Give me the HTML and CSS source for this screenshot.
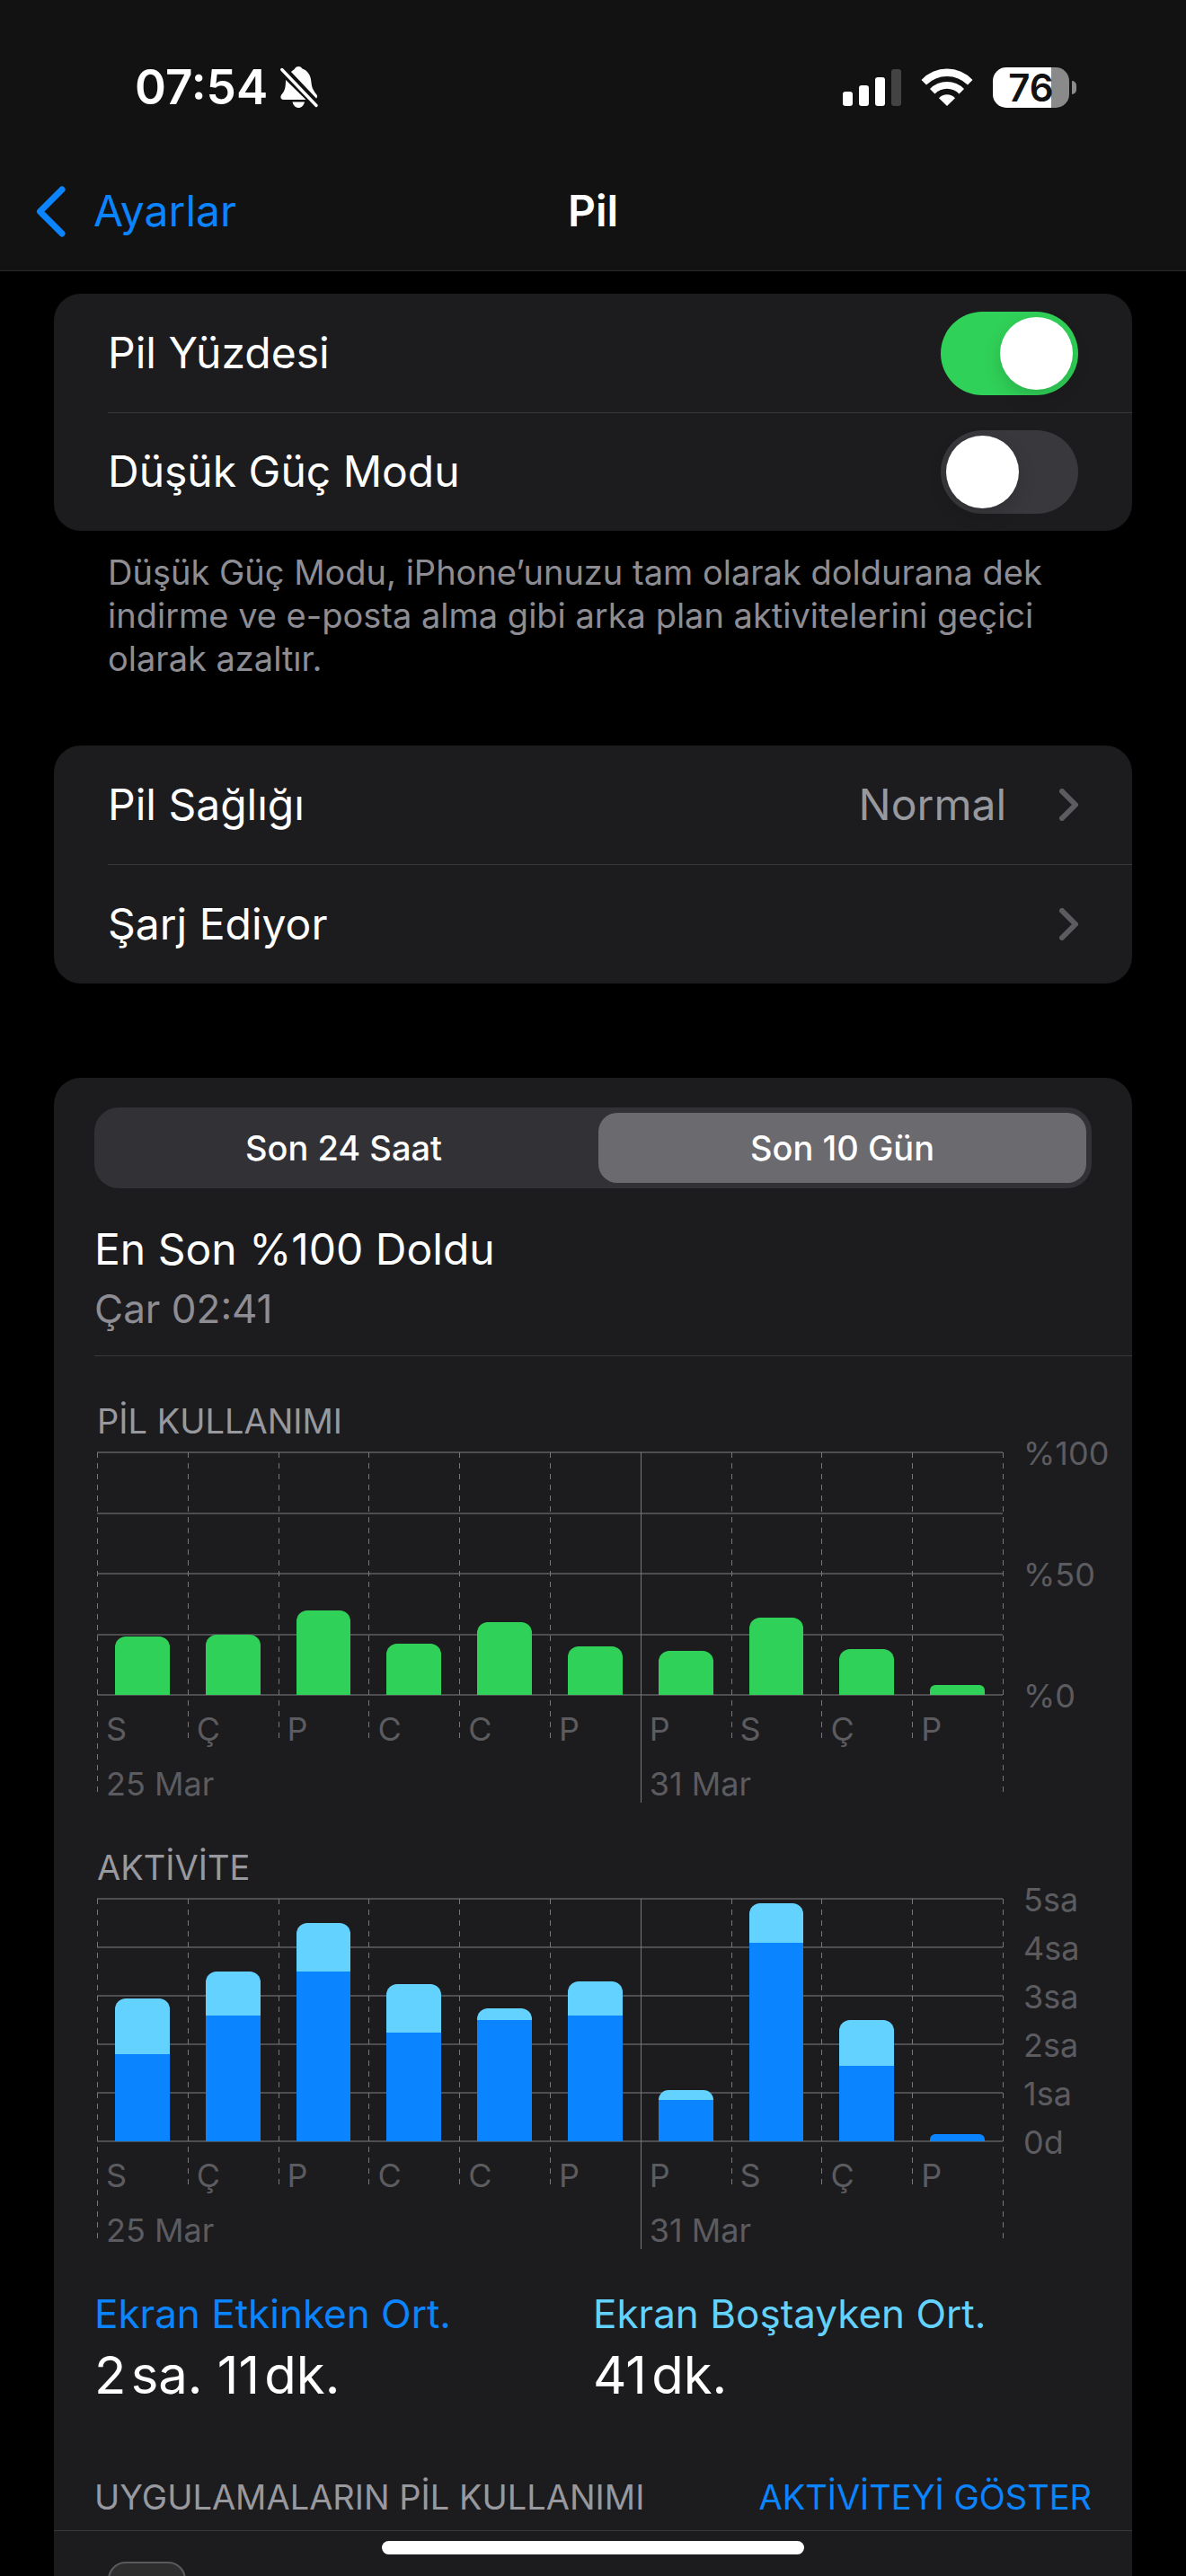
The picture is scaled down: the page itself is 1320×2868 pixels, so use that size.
FILE: index.html
```html
<!DOCTYPE html>
<html lang="tr">
<head>
  <meta charset="UTF-8">
  <meta name="viewport" content="width=device-width, initial-scale=1.0">
  <title>Pil</title>
  <link rel="stylesheet" href="styles.css">
</head>
<body>
  <header>
    <div class="status">
      <div class="status-left">
        <span class="time">07:54</span>
        <svg class="bell" width="42" height="46" viewBox="0 0 42 46" fill="#fff">
          <path d="M12 6 C14 4 15 4 16 2.500 C18 -0.800 22.500 -0.800 24.500 2.500 C31 5 34 10 34.500 18 C35 25 38 28 40.500 31.500 C41.500 33 41.200 34.500 40 35.500 Z"/>
          <path d="M6 15 L28.500 37 H3.500 C0.500 37 -0.500 34 1.200 31.500 C4 28 6 26 6 15 Z"/>
          <path d="M13.500 39.500 H27 C26 43.500 23.500 46 20.300 46 C17 46 14.500 43.500 13.500 39.500 Z"/>
          <path d="M1.800 3.500 L40 43.500" stroke="#fff" stroke-width="3.400" stroke-linecap="round"/>
        </svg>
      </div>
      <div class="status-right">
        <svg class="signal" width="65" height="42" viewBox="0 0 65 42" fill="#fff">
          <rect x="0" y="26" width="11" height="16" rx="3"/>
          <rect x="18" y="19" width="11" height="23" rx="3"/>
          <rect x="36" y="10" width="11" height="32" rx="3"/>
          <rect x="54" y="1" width="11" height="41" rx="3" fill="#434343"/>
        </svg>
        <svg class="wifi" width="58" height="42" viewBox="0 0 58 42" fill="#fff">
          <path d="M0.500 13 A39 39 0 0 1 57.500 13 L52 18.500 A32.600 32.600 0 0 0 6 18.500 Z"/>
          <path d="M10 23 A26.600 26.600 0 0 1 48 23 L42.500 28.500 A18.500 18.500 0 0 0 15.500 28.500 Z"/>
          <path d="M20 33.200 A12 12 0 0 1 38 33.200 L29 42 Z"/>
        </svg>
        <div class="battery">
          <span class="battery-body">76</span>
          <span class="battery-cap"></span>
        </div>
      </div>
    </div>
    <nav>
      <a class="back" href="#">
        <svg width="33" height="57" viewBox="0 0 33 57" fill="none" stroke="#0a84ff" stroke-width="7" stroke-linecap="round" stroke-linejoin="round">
          <path d="M29 4 L4.500 28.500 L29 53"/>
        </svg>
        <span>Ayarlar</span>
      </a>
      <h1>Pil</h1>
    </nav>
  </header>

  <main>
    <section class="group">
      <div class="row">
        <label for="yuzde">Pil Yüzdesi</label>
        <input class="switch" type="checkbox" id="yuzde" checked>
      </div>
      <div class="row">
        <label for="dusuk-guc">Düşük Güç Modu</label>
        <input class="switch" type="checkbox" id="dusuk-guc">
      </div>
    </section>
    <p class="note">Düşük Güç Modu, iPhone’unuzu tam olarak doldurana dek indirme ve e-posta alma gibi arka plan aktivitelerini geçici olarak azaltır.</p>

    <section class="group links">
      <a class="row" href="#">
        <span>Pil Sağlığı</span>
        <span class="value">Normal</span>
        <svg class="chevron" width="21" height="36" viewBox="0 0 21 36"><path d="M3 3 L18 18 L3 33"/></svg>
      </a>
      <a class="row" href="#">
        <span>Şarj Ediyor</span>
        <svg class="chevron" width="21" height="36" viewBox="0 0 21 36"><path d="M3 3 L18 18 L3 33"/></svg>
      </a>
    </section>

    <section class="group usage">
      <div class="segmented">
        <input type="radio" name="aralik" id="son-24"><label for="son-24">Son 24 Saat</label>
        <input type="radio" name="aralik" id="son-10" checked><label for="son-10">Son 10 Gün</label>
      </div>

      <div class="last-charge">
        <div>En Son %100 Doldu</div>
        <div class="when">Çar 02:41</div>
      </div>

      <h2 class="chart-title">PİL KULLANIMI</h2>
      <div class="chart">
        <div class="plot">
          <div class="lines"><i></i><i></i><i></i><i></i><i></i></div>
          <div class="days">
            <div class="day first"><div class="bar"><b class="green" style="height: 24%"></b></div><span>S</span><span>25 Mar</span></div>
            <div class="day"><div class="bar"><b class="green" style="height: 25%"></b></div><span>Ç</span></div>
            <div class="day"><div class="bar"><b class="green" style="height: 35%"></b></div><span>P</span></div>
            <div class="day"><div class="bar"><b class="green" style="height: 21%"></b></div><span>C</span></div>
            <div class="day"><div class="bar"><b class="green" style="height: 30%"></b></div><span>C</span></div>
            <div class="day"><div class="bar"><b class="green" style="height: 20%"></b></div><span>P</span></div>
            <div class="day week"><div class="bar"><b class="green" style="height: 18%"></b></div><span>P</span><span>31 Mar</span></div>
            <div class="day"><div class="bar"><b class="green" style="height: 32%"></b></div><span>S</span></div>
            <div class="day"><div class="bar"><b class="green" style="height: 19%"></b></div><span>Ç</span></div>
            <div class="day"><div class="bar low"><b class="green" style="height: 4%"></b></div><span>P</span></div>
          </div>
        </div>
        <div class="scale"><span>%100</span><span>%50</span><span>%0</span></div>
      </div>

      <h2 class="chart-title">AKTİVİTE</h2>
      <div class="chart">
        <div class="plot">
          <div class="lines"><i></i><i></i><i></i><i></i><i></i><i></i></div>
          <div class="days">
            <div class="day first"><div class="bar"><b class="idle" style="height: 23%"></b><b class="active" style="height: 36%"></b></div><span>S</span><span>25 Mar</span></div>
            <div class="day"><div class="bar"><b class="idle" style="height: 18%"></b><b class="active" style="height: 52%"></b></div><span>Ç</span></div>
            <div class="day"><div class="bar"><b class="idle" style="height: 20%"></b><b class="active" style="height: 70%"></b></div><span>P</span></div>
            <div class="day"><div class="bar"><b class="idle" style="height: 20%"></b><b class="active" style="height: 45%"></b></div><span>C</span></div>
            <div class="day"><div class="bar"><b class="idle" style="height: 5%"></b><b class="active" style="height: 50%"></b></div><span>C</span></div>
            <div class="day"><div class="bar"><b class="idle" style="height: 14%"></b><b class="active" style="height: 52%"></b></div><span>P</span></div>
            <div class="day week"><div class="bar"><b class="idle" style="height: 4%"></b><b class="active" style="height: 17%"></b></div><span>P</span><span>31 Mar</span></div>
            <div class="day"><div class="bar"><b class="idle" style="height: 16%"></b><b class="active" style="height: 82%"></b></div><span>S</span></div>
            <div class="day"><div class="bar"><b class="idle" style="height: 19%"></b><b class="active" style="height: 31%"></b></div><span>Ç</span></div>
            <div class="day"><div class="bar low"><b class="active" style="height: 3%"></b></div><span>P</span></div>
          </div>
        </div>
        <div class="scale"><span>5sa</span><span>4sa</span><span>3sa</span><span>2sa</span><span>1sa</span><span>0d</span></div>
      </div>

      <div class="summary">
        <div>
          <div class="summary-label on">Ekran Etkinken Ort.</div>
          <div class="summary-value">2&hairsp;sa. 11&hairsp;dk.</div>
        </div>
        <div>
          <div class="summary-label off">Ekran Boştayken Ort.</div>
          <div class="summary-value">41&hairsp;dk.</div>
        </div>
      </div>

      <div class="apps-head">
        <h2>UYGULAMALARIN PİL KULLANIMI</h2>
        <button type="button">AKTİVİTEYİ GÖSTER</button>
      </div>
      <div class="app">
        <span class="app-icon"></span>
      </div>
    </section>
  </main>

  <div class="home-indicator"></div>
</body>
</html>
```
FILE: styles.css
```css
:root {
  --bar: #121212;
  --card: #1c1c1e;
  --line: #38383a;
  --grid: #4e4e50;
  --dash: #77777b;
  --gray: #8d8d93;
  --light-gray: #98989f;
  --dark-gray: #5b5b60;
  --blue: #0a84ff;
  --cyan: #64d2ff;
  --green: #30d158;
}

* {
  box-sizing: border-box;
}

body {
  margin: 0;
  height: 100vh;
  display: flex;
  flex-direction: column;
  background-color: #000;
  color: #fff;
  font-family: Inter, "Liberation Sans", sans-serif;
  font-size: 48px;
  line-height: 60px;
}

h1, h2, p {
  margin: 0;
  font-weight: 400;
}

a {
  color: inherit;
  text-decoration: none;
}

header {
  flex: none;
  background-color: var(--bar);
  border-bottom: 1px solid #2a2a2b;
}

.status {
  display: flex;
  justify-content: space-between;
  padding: 52px 122px 27px 150px;
}

.status-left, .status-right {
  display: flex;
  align-items: center;
  height: 90px;
}

.status-left {
  gap: 14px;
}

.status-right {
  gap: 22px;
}

.time {
  font-size: 53px;
  font-weight: 600;
}

.battery {
  display: flex;
  align-items: center;
  gap: 3px;
}

.battery-body {
  width: 85px;
  height: 45px;
  border-radius: 15px;
  background: linear-gradient(to right, #fff 76%, #8a8a8a 76%);
  color: var(--bar);
  font-size: 42px;
  font-weight: 600;
  line-height: 45px;
  text-align: center;
}

.battery-cap {
  width: 5px;
  height: 15px;
  border-radius: 0 5px 5px 0;
  background-color: #8a8a8a;
}

nav {
  display: grid;
  grid-template-columns: 1fr auto 1fr;
  align-items: center;
  height: 132px;
  padding: 0 40px;
}

.back {
  display: flex;
  align-items: center;
  gap: 31px;
  color: var(--blue);
}

nav h1 {
  font-size: 48px;
  font-weight: 600;
}

main {
  flex: 1;
  min-height: 0;
  overflow-y: auto;
  scrollbar-width: none;
  padding: 25px 60px 0;
}

.group {
  border-radius: 30px;
  background-color: var(--card);
}

.row {
  position: relative;
  display: flex;
  align-items: center;
  height: 132px;
  padding: 0 60px;
}

.row + .row::before {
  content: "";
  position: absolute;
  top: 0;
  left: 60px;
  right: 0;
  height: 1px;
  background-color: var(--line);
}

.row > :first-child {
  flex: 1;
}

.switch {
  appearance: none;
  width: 153px;
  height: 93px;
  margin: 0;
  padding: 6px;
  border-radius: 47px;
  background-color: #39393d;
}

.switch::before {
  content: "";
  display: block;
  width: 81px;
  height: 81px;
  border-radius: 50%;
  background-color: #fff;
  box-shadow: 0 8px 20px rgba(0, 0, 0, 0.15);
}

.switch:checked {
  background-color: var(--green);
}

.switch:checked::before {
  margin-left: auto;
}

.note {
  padding: 22px 60px 73px;
  color: var(--gray);
  font-size: 38px;
  line-height: 48px;
}

.links .row + .row {
  height: 133px;
}

.value {
  margin-right: 59px;
  color: var(--light-gray);
}

.chevron {
  fill: none;
  stroke: var(--dark-gray);
  stroke-width: 6;
  stroke-linecap: round;
  stroke-linejoin: round;
}

.usage {
  margin-top: 105px;
  padding-top: 33px;
}

.segmented {
  display: flex;
  gap: 12px;
  height: 90px;
  margin: 0 45px;
  padding: 6px;
  border-radius: 27px;
  background-color: #323136;
}

.segmented input {
  position: absolute;
  opacity: 0;
}

.segmented label {
  flex: 1;
  border-radius: 21px;
  font-size: 38px;
  font-weight: 500;
  line-height: 78px;
  text-align: center;
}

.segmented input:checked + label {
  background-color: #6b6a6f;
}

.last-charge {
  margin-left: 45px;
  padding: 38px 0 22px;
  border-bottom: 1px solid var(--line);
}

.when {
  margin-top: 6px;
  color: var(--gray);
  font-size: 44px;
}

.chart-title {
  margin: 48px 0 10px 48px;
  color: var(--light-gray);
  font-size: 38px;
  line-height: 48px;
}

.chart {
  display: grid;
  grid-template-columns: 1fr 121px;
  gap: 23px;
  padding-left: 48px;
  color: var(--dark-gray);
  font-size: 36px;
  line-height: 40px;
}

.plot {
  position: relative;
  height: 391px;
}

.lines {
  position: absolute;
  top: 0;
  left: 0;
  right: 0;
  height: 272px;
  display: flex;
  flex-direction: column;
  justify-content: space-between;
}

.lines i {
  height: 2px;
  background-color: var(--grid);
}

.days {
  position: relative;
  display: grid;
  grid-template-columns: repeat(10, minmax(0, 1fr));
  height: 391px;
  padding-top: 1px;
}

/* last dashed line closes the plot on the right */
.days::after {
  content: "";
  position: absolute;
  top: 1px;
  right: -1px;
  width: 1px;
  height: 384px;
  background-image: repeating-linear-gradient(to bottom, var(--dash) 0 6px, transparent 6px 12px);
}

.day {
  display: flex;
  flex-direction: column;
  background-image: repeating-linear-gradient(to bottom, var(--dash) 0 6px, transparent 6px 12px);
  background-repeat: no-repeat;
  background-size: 1px 324px;
}

.day.first {
  background-size: 1px 384px;
}

.day.week {
  background-image: linear-gradient(var(--dash), var(--dash));
  background-size: 1px 390px;
}

.bar {
  display: flex;
  flex-direction: column;
  justify-content: flex-end;
  height: 270px;
  padding: 0 20px;
}

.bar b:first-child {
  border-radius: 12px 12px 0 0;
}

.bar.low b {
  border-radius: 6px 6px 0 0;
}

.day span {
  margin: 18px 0 3px 10px;
  white-space: nowrap;
}

.green {
  background-color: var(--green);
}

.active {
  background-color: var(--blue);
}

.idle {
  background-color: var(--cyan);
}

.scale {
  display: flex;
  flex-direction: column;
  justify-content: space-between;
  height: 310px;
  margin-top: -18px;
}

.summary {
  display: grid;
  grid-template-columns: 1fr 1fr;
  padding: 42px 45px 0;
}

.summary-label {
  font-size: 44px;
}

.summary-label.on {
  color: var(--blue);
}

.summary-label.off {
  color: var(--cyan);
}

.summary-value {
  margin-top: 3px;
  font-size: 58px;
  line-height: 70px;
}

.apps-head {
  display: flex;
  justify-content: space-between;
  margin-top: 77px;
  padding: 0 45px 13px;
  border-bottom: 1px solid var(--line);
  color: var(--light-gray);
}

.apps-head h2, .apps-head button {
  font-size: 38px;
  line-height: 48px;
}

.apps-head button {
  padding: 0;
  border: none;
  background: none;
  color: var(--blue);
  font-family: inherit;
}

.app {
  padding: 34px 60px;
}

.app-icon {
  display: block;
  width: 87px;
  height: 87px;
  border: 2px solid #5a5a5c;
  border-radius: 20px;
  background-color: #2e2e2f;
}

.home-indicator {
  position: fixed;
  left: 0;
  right: 0;
  bottom: 24px;
  width: 470px;
  height: 15px;
  margin: 0 auto;
  border-radius: 8px;
  background-color: #fff;
}
```
